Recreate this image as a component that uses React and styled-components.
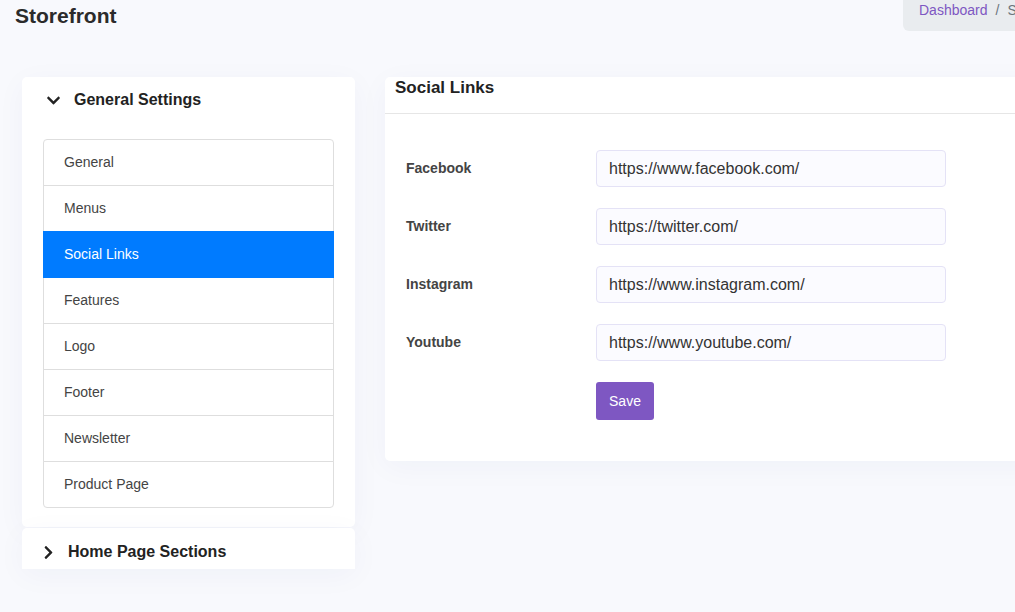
import React from "react"
import styled, {createGlobalStyle} from "styled-components"
import {FaChevronDown, FaChevronRight} from "react-icons/fa"

const GlobalStyle = createGlobalStyle`
  html, body {
    margin: 0;
    padding: 0;
    overflow: hidden;
    background: #f8f9fd;
  }
  body {
    font-family: "Liberation Sans", Arial, sans-serif;
    color: #333;
  }
  * {
    box-sizing: border-box;
  }
`

const menuItems = [
  "General",
  "Menus",
  "Social Links",
  "Features",
  "Logo",
  "Footer",
  "Newsletter",
  "Product Page",
]

const socialLinks = [
  {label: "Facebook", value: "https://www.facebook.com/"},
  {label: "Twitter", value: "https://twitter.com/"},
  {label: "Instagram", value: "https://www.instagram.com/"},
  {label: "Youtube", value: "https://www.youtube.com/"},
]

const App = () => {
  return (
    <Page>
      <GlobalStyle />
      <TopBar>
        <Title>Storefront</Title>
        <Breadcrumb>
          <CrumbLink>Dashboard</CrumbLink>
          <CrumbSep>/</CrumbSep>
          <CrumbCurrent>Storefront</CrumbCurrent>
        </Breadcrumb>
      </TopBar>
      <Main>
        <Sidebar>
          <Card>
            <CardToggle>
              <FaChevronDown size={15} />
              <span>General Settings</span>
            </CardToggle>
            <ListBody>
              <ListGroup>
                {menuItems.map((item) => (
                  <ListItem key={item} active={item === "Social Links"}>
                    {item}
                  </ListItem>
                ))}
              </ListGroup>
            </ListBody>
          </Card>
          <CollapsedCard>
            <CardToggle $collapsed>
              <FaChevronRight size={15} />
              <span>Home Page Sections</span>
            </CardToggle>
          </CollapsedCard>
        </Sidebar>
        <Panel>
          <PanelHeader>Social Links</PanelHeader>
          <PanelBody>
            {socialLinks.map((link) => (
              <FormRow key={link.label}>
                <Label>{link.label}</Label>
                <Input defaultValue={link.value} />
              </FormRow>
            ))}
            <FormRow>
              <span />
              <SaveButton>Save</SaveButton>
            </FormRow>
          </PanelBody>
        </Panel>
      </Main>
    </Page>
  )
}

const Page = styled.div`
  width: 1120px;
  min-height: 612px;
`

const TopBar = styled.div`
  display: grid;
  grid-template-columns: 888px auto;
  padding-left: 15px;
`

const Title = styled.h1`
  margin: 0;
  padding-top: 4px;
  font-size: 21px;
  line-height: 23px;
  font-weight: 700;
  color: #2b2b2b;
`

const Breadcrumb = styled.nav`
  display: flex;
  align-items: center;
  gap: 8px;
  height: 31px;
  padding: 0 16px 12px;
  background: #e9ecef;
  border-bottom-left-radius: 6px;
  font-size: 14px;
  line-height: 20px;
`

const CrumbLink = styled.a`
  color: #7e57c2;
`

const CrumbSep = styled.span`
  color: #6c757d;
`

const CrumbCurrent = styled.span`
  color: #6c757d;
`

const Main = styled.div`
  display: grid;
  grid-template-columns: 333px 1fr;
  gap: 30px;
  align-items: start;
  padding: 46px 0 0 22px;
`

const Sidebar = styled.div`
  display: flex;
  flex-direction: column;
  gap: 1px;
`

const Card = styled.div`
  background: #fff;
  border-radius: 5px;
  box-shadow: 0 6px 30px rgba(30, 40, 120, 0.04);
  padding-bottom: 19px;
`

const CollapsedCard = styled(Card)`
  height: 41px;
  padding-bottom: 0;
  overflow: hidden;
  border-bottom-left-radius: 0;
  border-bottom-right-radius: 0;
`

const CardToggle = styled.div`
  display: flex;
  align-items: center;
  gap: ${(props) => (props.$collapsed ? "12px" : "13px")};
  height: ${(props) => (props.$collapsed ? "48px" : "46px")};
  padding: 0 0 0 ${(props) => (props.$collapsed ? "19px" : "24px")};
  font-size: 16px;
  font-weight: 700;
  color: #222;
  svg {
    color: #222;
  }
`

const ListBody = styled.div`
  padding: 16px 21px 0;
`

const ListGroup = styled.div`
  display: flex;
  flex-direction: column;
`

const ListItem = styled.div`
  display: flex;
  align-items: center;
  height: 47px;
  padding: 0 20px 2px;
  margin-top: -1px;
  border: 1px solid ${(props) => (props.active ? "#007bff" : "#dedede")};
  background: ${(props) => (props.active ? "#007bff" : "#fff")};
  color: ${(props) => (props.active ? "#fff" : "#444")};
  font-size: 14px;
  position: relative;
  z-index: ${(props) => (props.active ? 1 : 0)};

  &:first-child {
    margin-top: 0;
    border-top-left-radius: 4px;
    border-top-right-radius: 4px;
  }
  &:last-child {
    border-bottom-left-radius: 4px;
    border-bottom-right-radius: 4px;
  }
`

const Panel = styled.div`
  background: #fff;
  border-radius: 5px;
  box-shadow: 0 6px 30px rgba(30, 40, 120, 0.04);
`

const PanelHeader = styled.div`
  height: 37px;
  padding: 1px 10px 0;
  font-size: 17px;
  line-height: 20px;
  font-weight: 700;
  color: #222;
  border-bottom: 1px solid #e6e6e6;
`

const PanelBody = styled.div`
  display: flex;
  flex-direction: column;
  gap: 21px;
  padding: 36px 21px 41px;
`

const FormRow = styled.div`
  display: grid;
  grid-template-columns: 190px 350px;
  align-items: center;
`

const Label = styled.label`
  font-size: 14px;
  font-weight: 700;
  color: #444;
  padding-bottom: 2px;
`

const Input = styled.input`
  height: 37px;
  width: 350px;
  padding: 1px 12px 0;
  border: 1px solid #e4e2f6;
  border-radius: 4px;
  background: #fbfbff;
  font-family: "Liberation Sans", Arial, sans-serif;
  font-size: 16px;
  color: #333;
  outline: none;
`

const SaveButton = styled.button`
  width: 58px;
  height: 38px;
  border: none;
  border-radius: 3px;
  background: #7e57c2;
  color: #fff;
  font-family: "Liberation Sans", Arial, sans-serif;
  font-size: 14px;
  cursor: pointer;
`

export default App
